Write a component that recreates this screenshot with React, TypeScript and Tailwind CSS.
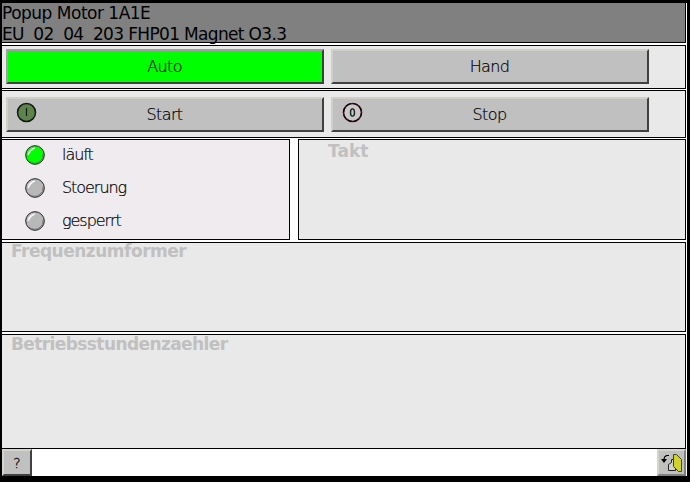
import type { ReactNode } from "react";

function PushButton({ label, active, icon }: { label: string; active?: boolean; icon?: ReactNode }) {
  return (
    <button
      className={`relative flex h-[35px] w-[318px] items-center justify-center border-2 border-r-[#404040] border-b-[#404040] text-[16px] leading-5 font-extralight ${
        active ? "border-t-[#a0a0a0] border-l-[#a0a0a0] bg-[#00ff00]" : "border-t-[#d0d0c8] border-l-[#d0d0c8] bg-[#c0c0c0]"
      }`}
    >
      {icon}
      <span className="mt-px -ml-px tracking-[-0.6px] [-webkit-text-stroke:0.2px_#000]">{label}</span>
    </button>
  );
}

function StartIcon() {
  return (
    <svg className="absolute top-[3px] left-[8px]" width="21" height="21" viewBox="0 0 21 21">
      <circle cx="10.5" cy="10.5" r="9" fill="#5f834f" stroke="#101b0c" strokeWidth="1.5" />
      <path d="M10.5 6v8" stroke="#101b0c" strokeWidth="1.2" />
    </svg>
  );
}

function StopIcon() {
  return (
    <svg className="absolute top-[3px] left-[9px]" width="21" height="21" viewBox="0 0 21 21">
      <circle cx="10.5" cy="10.5" r="9" fill="#c9c9c9" stroke="#501018" strokeWidth="1.6" />
      <circle cx="10.5" cy="10.5" r="9" fill="none" stroke="#080808" strokeWidth="1.2" strokeDasharray="5 2.07" />
      <ellipse cx="10.5" cy="10.5" rx="2" ry="3.6" fill="none" stroke="#182022" strokeWidth="1.4" />
    </svg>
  );
}

function Lamp({ label, on }: { label: string; on?: boolean }) {
  return (
    <div className="flex h-[33px] items-center">
      <svg width="20" height="20" viewBox="0 0 20 20">
        <circle cx="10" cy="10" r="9.3" fill={on ? "#00ff00" : "#b8b8b8"} stroke="#202020" strokeWidth="1" />
        <path d="M3 10Q3.5 4 10 2.8Q6 5 3 10" fill="#fff" stroke="#fff" strokeWidth="1" opacity=".9" />
        <path d="M4 16Q9 20 14 17T18 9" fill="none" stroke="#666" strokeWidth=".7" />
      </svg>
      <span className="ml-[17px] text-[16px] leading-5 font-extralight tracking-[-1.05px] [-webkit-text-stroke:0.2px_#000]">{label}</span>
    </div>
  );
}

export default function App() {
  return (
    <main className="h-[482px] w-[690px] overflow-hidden bg-black pt-[3px] pl-[2px] font-['DejaVu_Sans',sans-serif] text-black">
      <div className="flex h-[473px] w-[685px] flex-col bg-white">
        <header className="mr-px h-[40px] border-r border-b border-black bg-[#808080] text-[17px] leading-[21px]">
          <div className="whitespace-pre tracking-[-0.5px]">Popup Motor 1A1E</div>
          <div className="whitespace-pre tracking-[-0.66px]">EU  02  04  203 FHP01 Magnet O3.3</div>
        </header>
        <section className="mt-[2px] mr-px flex h-[44px] gap-[7px] border-y border-r border-black bg-[#e9e9e9] pt-[3px] pl-[4px]">
          <PushButton label="Auto" active />
          <PushButton label="Hand" />
        </section>
        <section className="mt-px mr-px flex h-[48px] gap-[7px] border-y border-r border-black bg-[#e9e9e9] pt-[6px] pl-[4px]">
          <PushButton label="Start" icon={<StartIcon />} />
          <PushButton label="Stop" icon={<StopIcon />} />
        </section>
        <div className="mt-px mr-px flex h-[101px] gap-[8px]">
          <section className="w-[288px] border-y border-r border-black bg-[#efebef] pl-[23px]">
            <div className="-mt-[2px]">
              <Lamp label="läuft" on />
              <Lamp label="Stoerung" />
              <Lamp label="gesperrt" />
            </div>
          </section>
          <section className="flex-1 border border-black bg-[#e9e9e9] pl-[29px] text-[17px] leading-[22px] font-bold text-[#c0c0c0]">Takt</section>
        </div>
        <section className="mt-[2px] mr-px h-[90px] border-y border-r border-black bg-[#e9e9e9] pl-[9px] text-[17px] leading-[17px] font-bold tracking-[-0.5px] text-[#c0c0c0]">Frequenzumformer</section>
        <section className="mt-[2px] mr-px h-[115px] border-y border-r border-black bg-[#e9e9e9] pl-[9px] text-[17px] leading-[18px] font-bold tracking-[-0.6px] text-[#c0c0c0]">Betriebsstundenzaehler</section>
        <footer className="flex h-[27px] justify-between bg-white">
          <button className="h-[27px] w-[30px] border-2 border-t-[#d4d4cc] border-r-[#404040] border-b-[#404040] border-l-[#d4d4cc] bg-[#c0c0c0] text-[14px] leading-5 font-extralight [-webkit-text-stroke:0.3px_#000]">?</button>
          <button className="mr-px flex h-[27px] w-[29px] items-center justify-center border-2 border-t-[#d4d4cc] border-r-[#808080] border-b-[#808080] border-l-[#d4d4cc] bg-[#c0c0c0]">
            <svg className="shrink-0" width="24" height="22" viewBox="0 0 24 22">
              <path d="M9 3.5H7Q4 4 4 8" fill="none" stroke="#000" strokeWidth="1.2" />
              <path d="M1 7h6l-3 4z" />
              <path d="M11.5 7.5h4v11h-7v-6l3-2z" fill="#d0d0d0" stroke="#222" />
              <path d="M13.5 2.5h3l5 5v12h-3l-5-5z" fill="#d0d42a" stroke="#44450c" />
            </svg>
          </button>
        </footer>
      </div>
    </main>
  );
}
